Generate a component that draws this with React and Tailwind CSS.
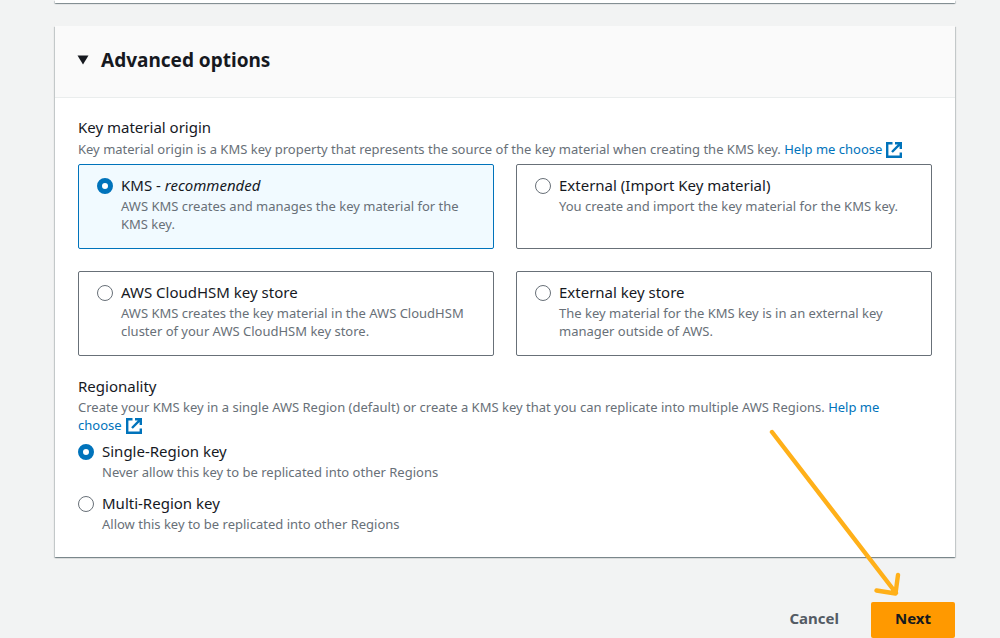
const originOptions = [
  {
    id: "kms",
    title: "KMS - ",
    note: "recommended",
    text: "AWS KMS creates and manages the key material for the KMS key.",
  },
  {
    id: "external",
    title: "External (Import Key material)",
    text: "You create and import the key material for the KMS key.",
  },
  {
    id: "cloudhsm",
    title: "AWS CloudHSM key store",
    text: "AWS KMS creates the key material in the AWS CloudHSM cluster of your AWS CloudHSM key store.",
  },
  {
    id: "external-store",
    title: "External key store",
    text: "The key material for the KMS key is in an external key manager outside of AWS.",
  },
];

const regionOptions = [
  {
    id: "single",
    title: "Single-Region key",
    text: "Never allow this key to be replicated into other Regions",
  },
  {
    id: "multi",
    title: "Multi-Region key",
    text: "Allow this key to be replicated into other Regions",
  },
];

const radioClass =
  "mt-[3px] size-4 shrink-0 appearance-none rounded-full border border-[#687078] bg-white checked:border-5 checked:border-[#0073bb]";

const panelShadow =
  "shadow-[0_1px_1px_0_rgba(0,28,36,0.3),1px_1px_1px_0_rgba(0,28,36,0.15),-1px_1px_1px_0_rgba(0,28,36,0.15)]";

function HelpLink({ href }) {
  return (
    <a href={href} className="text-[#0073bb]">
      Help me{" "}
      <span className="whitespace-nowrap">
        choose
        <svg
          viewBox="0 0 16 16"
          className="ml-1 inline-block size-4 align-[-4px]"
          fill="none"
          stroke="currentColor"
          strokeWidth="2.4"
          aria-hidden="true"
        >
          <path d="M6.5 1.2H1.2v13.6h13.6v-4.3" />
          <path d="M9 1.2h5.8V7M14.8 1.2 6 10" />
        </svg>
      </span>
    </a>
  );
}

function RadioOption({ option, name, checked, className }) {
  return (
    <label className={`flex gap-2 ${className}`}>
      <input type="radio" name={name} defaultChecked={checked} className={radioClass} />
      <span className="block">
        <span className="block text-[15px] leading-5 text-[#16191f]">
          {option.title}
          {option.note && <em>{option.note}</em>}
        </span>
        <span className="mt-0.5 block text-[13px] leading-[18px] text-[#687078]">
          {option.text}
        </span>
      </span>
    </label>
  );
}

export default function App() {
  return (
    <div className="min-h-screen bg-[#f2f3f3] pr-[45px] pl-[55px] font-['Noto_Sans',sans-serif] text-[#16191f]">
      <div className={`h-[3px] bg-white ${panelShadow}`} />

      <main>
        <section className={`mt-[23px] bg-white ${panelShadow}`}>
          <h2 className="border-b border-[#eaeded] bg-[#fafafa]">
            <button
              type="button"
              aria-expanded="true"
              className="flex w-full items-center gap-3 px-[22px] pt-5 pb-[23px] text-left text-[19px] leading-7 font-bold"
            >
              <svg viewBox="0 0 12 10" className="h-2.5 w-3 fill-[#16191f]" aria-hidden="true">
                <path d="M0.5 0.5h11L6 9.5z" />
              </svg>
              Advanced options
            </button>
          </h2>

          <div className="px-[23px] pt-[19px] pb-6">
            <fieldset>
              <legend className="text-[15px] leading-5">Key material origin</legend>
              <p className="mt-[3px] text-[13px] leading-[18px] text-[#687078]">
                Key material origin is a KMS key property that represents the source of the key
                material when creating the KMS key. <HelpLink href="#origin-help" />
              </p>
              <div className="mt-[6px] grid grid-cols-2 gap-[22px]">
                {originOptions.map((option) => (
                  <RadioOption
                    key={option.id}
                    option={option}
                    name="origin"
                    checked={option.id === "kms"}
                    className="rounded-xs border border-[#687078] bg-white px-[18px] pt-[10px] pb-[15px] has-checked:border-[#0073bb] has-checked:bg-[#f1faff]"
                  />
                ))}
              </div>
            </fieldset>

            <fieldset className="mt-5">
              <legend className="text-[15px] leading-5">Regionality</legend>
              <p className="mt-0.5 text-[13px] leading-[18px] text-[#687078]">
                Create your KMS key in a single AWS Region (default) or create a KMS key that you
                can replicate into multiple AWS Regions. <HelpLink href="#region-help" />
              </p>
              <div className="mt-[7px] flex flex-col gap-3">
                {regionOptions.map((option) => (
                  <RadioOption
                    key={option.id}
                    option={option}
                    name="regionality"
                    checked={option.id === "single"}
                    className=""
                  />
                ))}
              </div>
            </fieldset>
          </div>
        </section>

        <div className="relative mt-[45px] flex justify-end gap-3">
          <button
            type="button"
            className="rounded-xs px-5 pt-1.5 pb-2.5 text-[15px] leading-5 font-bold text-[#545b64]"
          >
            Cancel
          </button>
          <button
            type="button"
            className="rounded-xs bg-[#ff9900] px-6 pt-1.5 pb-2.5 text-[15px] leading-5 font-bold"
          >
            Next
          </button>
          <svg
            viewBox="0 0 140 172"
            className="pointer-events-none absolute right-[50px] bottom-[38px] h-[172px] w-[140px]"
            fill="none"
            stroke="#ffb019"
            strokeWidth="4.4"
            strokeLinecap="round"
            strokeLinejoin="round"
            aria-hidden="true"
          >
            <path d="M7 4 131 165M133 147l-2.500 18.500-19-3" />
          </svg>
        </div>
      </main>
    </div>
  );
}
